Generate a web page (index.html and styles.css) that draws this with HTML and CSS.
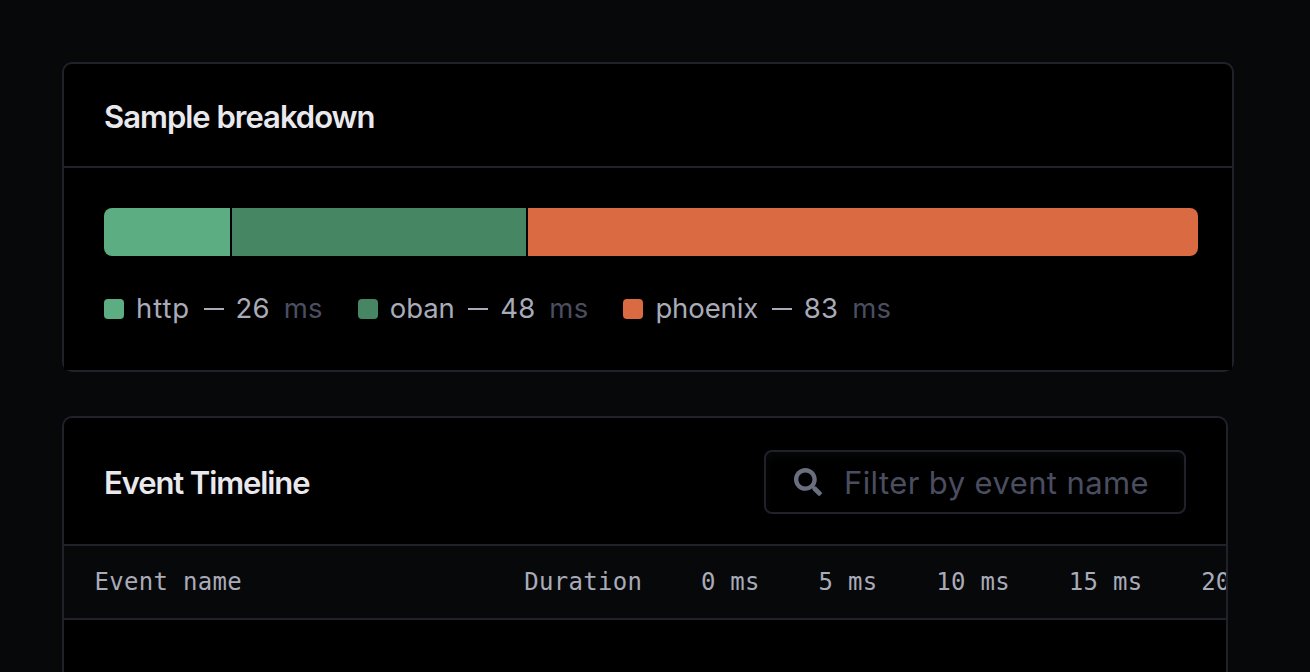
FILE: index.html
```html
<!DOCTYPE html>
<html lang="en">
<head>
    <meta charset="UTF-8">
    <meta name="viewport" content="width=device-width, initial-scale=1.0">
    <title>Sample breakdown</title>

    <link rel="stylesheet" href="styles.css">
</head>
<body>

    <div class="card breakdown">
        <div class="card-header">
            <h2>Sample breakdown</h2>
        </div>
        <div class="card-body">
            <div class="bar">
                <div class="segment http" style="width: 126px"></div>
                <div class="segment oban" style="width: 294px"></div>
                <div class="segment phoenix" style="width: 670px"></div>
            </div>
            <ul class="legend">
                <li><span class="swatch http"></span><span class="name wide">http</span><span class="dash"></span><span class="value">26</span><span class="unit">ms</span></li>
                <li><span class="swatch oban"></span><span class="name">oban</span><span class="dash"></span><span class="value">48</span><span class="unit">ms</span></li>
                <li><span class="swatch phoenix"></span><span class="name">phoenix</span><span class="dash"></span><span class="value">83</span><span class="unit">ms</span></li>
            </ul>
        </div>
    </div>

    <div class="card timeline">
        <div class="card-header">
            <h2>Event Timeline</h2>
            <label class="search">
                <svg viewBox="0 0 512 512" aria-hidden="true">
                    <path d="M505 442.700L405.300 343c-4.500-4.500-10.600-7-17-7H372c27.600-35.300 44-79.700 44-128C416 93.100 322.900 0 208 0S0 93.100 0 208s93.100 208 208 208c48.300 0 92.700-16.400 128-44v16.300c0 6.400 2.500 12.500 7 17l99.700 99.700c9.400 9.400 24.600 9.400 33.900 0l28.300-28.300c9.400-9.400 9.400-24.600.1-34zM208 336c-70.700 0-128-57.200-128-128 0-70.700 57.200-128 128-128 70.700 0 128 57.200 128 128 0 70.700-57.200 128-128 128z"/>
                </svg>
                <input type="text" placeholder="Filter by event name">
            </label>
        </div>
        <div class="columns">
            <span class="event-name">Event name</span>
            <span>Duration</span>
            <span>0 ms</span>
            <span>5 ms</span>
            <span>10 ms</span>
            <span>15 ms</span>
            <span>20 ms</span>
        </div>
    </div>

</body>
</html>
```

FILE: styles.css
```css
* {
    box-sizing: border-box;
}

body {
    margin: 0;
    padding: 62px 76px 0 62px;
    height: 672px;
    overflow: hidden;
    background-color: #07080a;
    color: #a9abb8;
    font-family: Inter, sans-serif;
}

.card {
    border: 2px solid #20212a;
    border-radius: 10px;
    background-color: #000;
}

.card-header {
    display: flex;
    align-items: center;
    justify-content: space-between;
    padding: 0 40px;
    border-bottom: 2px solid #20212a;
}

h2 {
    margin: 0;
    color: #e9e9ed;
    font-size: 31px;
    font-weight: 600;
    line-height: 40px;
    letter-spacing: -1px;
}

.breakdown {
    height: 310px;
}

.breakdown .card-header {
    height: 104px;
    padding-top: 4px;
}

.card-body {
    height: 202px;
    padding: 40px 34px 0 40px;
    background-color: #000;
}

.bar {
    display: flex;
    gap: 2px;
    height: 48px;
    border-radius: 8px;
    overflow: hidden;
}

.http {
    background-color: #5cad82;
}

.oban {
    background-color: #478663;
}

.phoenix {
    background-color: #d96a42;
}

.legend {
    display: flex;
    gap: 35px;
    margin: 32px 0 0;
    padding: 0;
    list-style: none;
    font-size: 27.5px;
    line-height: 40px;
    letter-spacing: 0.2px;
}

.legend li {
    display: flex;
    align-items: center;
}

.swatch {
    width: 20px;
    height: 20px;
    margin: 2px 12px 0 0;
    border-radius: 4px;
}

.name {
    letter-spacing: -0.1px;
}

.name.wide {
    letter-spacing: 0.9px;
}

.dash {
    width: 20px;
    height: 2px;
    margin: 2px 12px 0 13.5px;
    background-color: #a9abb8;
}

.unit {
    margin-left: 14px;
    color: #4a4e60;
}

.timeline {
    width: 1166px;
    height: 256px;
    margin-top: 44px;
    border-bottom: none;
    border-radius: 10px 10px 0 0;
    overflow: hidden;
}

.timeline .card-header {
    height: 128px;
    padding-top: 2px;
}

.timeline h2 {
    padding-top: 2px;
    letter-spacing: -1.1px;
}

.search {
    display: flex;
    align-items: center;
    width: 422px;
    height: 64px;
    padding: 0 28px;
    border: 2px solid #20212a;
    border-radius: 8px;
    box-shadow: inset 0 4px 8px #07080a;
}

.search svg {
    width: 28px;
    height: 28px;
    flex-shrink: 0;
    fill: #6b6e7f;
}

.search input {
    width: 320px;
    margin-left: 22px;
    padding: 0;
    border: none;
    outline: none;
    background: none;
    color: #a9abb8;
    font-family: inherit;
    font-size: 31px;
    letter-spacing: 0.4px;
}

.search input::placeholder {
    color: #4a4e60;
}

.columns {
    display: flex;
    gap: 58.7px;
    height: 74px;
    padding-left: 30.5px;
    border-bottom: 2px solid #20212a;
    background-color: #07080a;
    font-family: "DejaVu Sans Mono", monospace;
    font-size: 24px;
    line-height: 72px;
    letter-spacing: 0.3px;
    white-space: nowrap;
}

.columns span {
    flex-shrink: 0;
}

.columns .event-name {
    width: 371px;
}
```
